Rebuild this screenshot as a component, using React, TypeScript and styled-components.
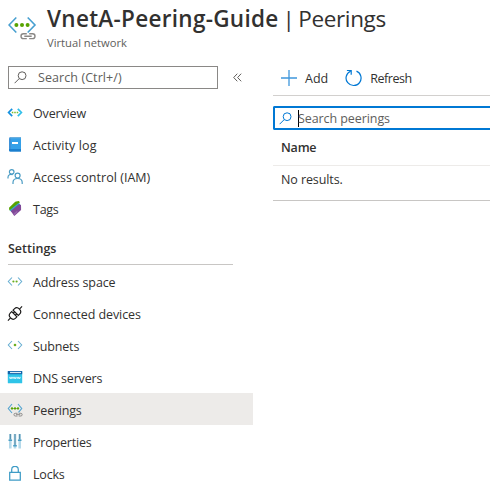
import React from 'react';
import styled, { createGlobalStyle } from 'styled-components';

const Global = createGlobalStyle`
  * { box-sizing: border-box; }
  body { margin: 0; background: #fff; color: #323130; font-family: 'Open Sans', 'Noto Sans', sans-serif; font-size: 12.5px; overflow: hidden; }
  svg { display: block; flex: none; }
`;

const Page = styled.main`
  width: 490px;
  height: 502px;
  overflow: hidden;
  background: #fff;
`;
const Header = styled.header`
  display: flex;
  height: 66px;
  padding: 16px 0 0 8px;
  gap: 10px;
`;
const Titles = styled.div`
  margin-top: -12px;
  white-space: nowrap;
`;
const Title = styled.h1`
  margin: 0;
  height: 30px;
  font-size: 22.5px;
  line-height: 30px;
  font-weight: 400;
  letter-spacing: -0.35px;
  word-spacing: -1.7px;
`;
const Strong = styled.span`
  font-weight: 600;
  letter-spacing: 0.3px;
`;
const Subtitle = styled.div`
  height: 16px;
  margin-top: 1px;
  font-size: 11.2px;
  line-height: 16px;
  color: #605e5c;
`;
const Columns = styled.div`
  display: flex;
`;
const Sidebar = styled.nav`
  width: 253px;
  flex: none;
`;
const Main = styled.section`
  flex: 1;
  margin-left: 20px;
`;
const SearchRow = styled.div`
  display: flex;
  align-items: center;
  gap: 15px;
  height: 23px;
  margin: 0 0 7px 8px;
`;
const SearchBox = styled.div`
  display: flex;
  align-items: center;
  width: 210px;
  height: 23px;
  padding-left: 5px;
  gap: 11px;
  border: 1px solid #8a8886;
  color: #605e5c;
`;
const Item = styled.a<{ $active?: boolean }>`
  display: flex;
  align-items: center;
  height: 32px;
  padding: 2px 0 0 7px;
  gap: 10px;
  background: ${(p) => (p.$active ? '#edebe9' : 'transparent')};
`;
const Label = styled.span<{ $spacing?: number }>`
  padding-top: 1px;
  line-height: 17px;
  white-space: nowrap;
  letter-spacing: ${(p) => p.$spacing ?? 0}px;
`;
const SearchLabel = styled(Label)`
  padding: 0;
  line-height: 18px;
`;
const SectionTitle = styled.h2`
  width: 225px;
  height: 33px;
  margin: 8px 0 0 8px;
  padding-top: 8px;
  border-bottom: 1px solid #c8c6c4;
  font-size: 12.5px;
  line-height: 18px;
  font-weight: 600;
`;
const Toolbar = styled.div`
  display: flex;
  height: 30px;
  padding: 3px 0 0 8px;
  gap: 17px;
  border-bottom: 1px solid #d2d0ce;
`;
const Command = styled.button`
  display: flex;
  align-items: center;
  height: 18px;
  padding: 0;
  gap: 8px;
  border: 0;
  background: none;
  color: inherit;
  font: inherit;
`;
const Filter = styled.div`
  display: flex;
  align-items: center;
  height: 24px;
  margin-top: 10px;
  padding-left: 4px;
  border: 2px solid #0078d4;
  border-right: 0;
  border-radius: 2px 0 0 2px;
  color: #605e5c;
`;
const FilterText = styled(Label)`
  margin-left: -1px;
`;
const Caret = styled.span`
  width: 1px;
  height: 17px;
  margin: 0 0 0 6px;
  background: #000;
`;
const HeadCell = styled.div`
  height: 36px;
  padding: 9px 0 0 8px;
  border-bottom: 1px solid #edebe9;
  line-height: 18px;
  font-weight: 600;
  letter-spacing: -0.2px;
`;
const Cell = styled.div`
  height: 35px;
  padding: 5px 0 0 8px;
  border-bottom: 1px solid #c8c6c4;
  line-height: 18px;
  letter-spacing: -0.1px;
`;

const Magnifier = ({ color }: { color: string }) => (
  <svg width="13" height="13" viewBox="0 0 13 13" fill="none" stroke={color} strokeWidth="1">
    <circle cx="8.100" cy="4.700" r="3.900" />
    <path d="M5.200 7.600.6 12.200" />
  </svg>
);

const NetworkIcon = () => (
  <svg width="29" height="25" viewBox="0 0 29 25" fill="none">
    <path d="M8.300 1.500 1 9l7.300 7.500M19.700 1.500 27 9l-7.300 7.500" stroke="#479fd0" strokeWidth="1.600" />
    <circle cx="8.400" cy="9" r="2" fill="#57a300" />
    <circle cx="14" cy="9" r="2" fill="#57a300" />
    <circle cx="19.600" cy="9" r="2" fill="#57a300" />
    <path
      d="M18.800 17.800h-3.400a2.400 2.400 0 0 0 0 4.800h3.400M21.200 17.800h3.400a2.400 2.400 0 0 1 0 4.800h-3.400M16.300 20.200h7.400"
      stroke="#fff"
      strokeWidth="3"
    />
    <path
      d="M18.800 17.800h-3.400a2.400 2.400 0 0 0 0 4.800h3.400M21.200 17.800h3.400a2.400 2.400 0 0 1 0 4.800h-3.400M16.300 20.200h7.400"
      stroke="#8a8886"
      strokeWidth="1.400"
    />
  </svg>
);

type IconName = 'overview' | 'log' | 'iam' | 'tag' | 'address' | 'plug' | 'subnet' | 'dns' | 'peering' | 'properties' | 'lock';

const drawings: Record<IconName, React.ReactNode> = {
  overview: (
    <>
      <path d="M5.200 3.900 1.600 7.500l3.600 3.600" stroke="#1490df" strokeWidth="1.700" />
      <path d="m10.800 3.900 3.600 3.600-3.600 3.600" stroke="#32bfea" strokeWidth="1.700" />
      <path d="M4.800 7.500h1.500M7.250 7.500h1.500M9.700 7.500h1.500" stroke="#76bc2d" strokeWidth="1.500" />
    </>
  ),
  log: (
    <>
      <path d="M3.500 0H14v14.500H3.500A1.500 1.500 0 0 1 2 13V1.500A1.500 1.500 0 0 1 3.500 0Z" fill="#3c91d8" />
      <path d="M4 1h10v11.500H4z" fill="#35a0e8" />
      <path d="M2 12h12v2.600H3.500Q2 14.600 2 13z" fill="#1b7fce" />
      <path d="M3.500 0H14v1.200H2.600z" fill="#6aaede" />
      <path d="M5 5h6v2H5z" fill="#fff" />
    </>
  ),
  iam: (
    <g stroke="#4a9cc4" strokeWidth="1.200">
      <circle cx="4.700" cy="2.900" r="2.300" />
      <path d="M1 9.500V8.300c0-2.600 2.300-3.400 4.600-2.500" />
      <circle cx="10.600" cy="6.600" r="2.500" />
      <path d="M6 15v-1.500c0-2.500 1.700-4 4.600-4s4.600 1.500 4.600 4V15" />
    </g>
  ),
  tag: (
    <>
      <path d="M2 6.800 7.700 1.200Q8.300.6 9 .5L12 0l.8 1.500L5 9.500 2.300 9.200z" fill="#57a300" />
      <path d="M2.600 9.200 11.500 2l1.600 1v2L6 12z" fill="#32a8cf" />
      <path d="m3.700 10 8.100-6.700 2.200.6.100 5-6.800 6.200z" fill="#804998" />
      <path d="m6.500 12.500 3.300-2.500 1 1-3.600 3.300z" fill="#9864ae" />
    </>
  ),
  address: (
    <>
      <path d="M5 3.500 1.300 7.500 5 11.500M11 3.500l3.700 4-3.700 4" stroke="#65add1" strokeWidth="1.050" />
      <circle cx="6.400" cy="7.500" r="1.100" fill="#69ae21" />
      <circle cx="9.600" cy="7.500" r="1.100" fill="#69ae21" />
    </>
  ),
  plug: (
    <g stroke="#1b1a19" strokeWidth="1.150" transform="translate(0 -.5) rotate(-45 8 8)">
      <path d="M-2 8h3.700M14.300 8H18M7 4.300H5.200C3 4.300 1.700 6 1.700 8s1.300 3.700 3.500 3.700H7zM9 4.300h1.800c2.200 0 3.500 1.700 3.500 3.700s-1.300 3.700-3.500 3.700H9zM7 6.500h2M7 9.500h2" />
    </g>
  ),
  subnet: (
    <>
      <path d="M5 3 1.300 7 5 11M11 3l3.700 4L11 11" stroke="#65add1" strokeWidth="1.050" />
      <circle cx="8" cy="7" r="1.300" fill="#69ae21" />
    </>
  ),
  dns: (
    <>
      <path d="M.8 1.500h14.400v11.200q0 .5-.5.500H1.300q-.5 0-.5-.5z" fill="#2fc4e8" />
      <path d="M.8 1h14.400v3.200H.8z" fill="#1464aa" />
      <path d="M3 1.900h11v1.200H3z" fill="#dcecf5" />
      <path
        d="m2.500 6.900.8 2 .8-2 .8 2 .8-2M6.300 6.900l.8 2 .8-2 .8 2 .8-2M10.200 6.900l.8 2 .8-2 .8 2 .8-2"
        stroke="#effcff"
        strokeWidth=".8"
      />
    </>
  ),
  peering: (
    <g transform="translate(0 .5)">
      <path d="M5 1.500 1.300 6 5 10.500M11 1.500 14.700 6l-3.200 3.800" stroke="#55a5d0" strokeWidth="1.150" />
      <path d="M3.800 6h8.400" stroke="#78b73c" strokeWidth=".8" />
      <g fill="#57a300">
        <circle cx="5" cy="6" r="1.150" />
        <circle cx="8" cy="6" r="1.150" />
        <circle cx="11" cy="6" r="1.150" />
      </g>
      <path
        d="M10.500 10.800H8.300a1.350 1.350 0 0 0 0 2.700h2.200M11.700 10.800h2.100a1.350 1.350 0 0 1 0 2.700h-2.100M9 12.150h4.200"
        stroke="#8a8886"
        strokeWidth=".95"
      />
    </g>
  ),
  properties: (
    <>
      <path d="M2 0h2.600v14.600H2zM6.700 0h2.600v14.600H6.700zM11.400 0H14v14.600h-2.600z" fill="#b4d9ea" />
      <path d="M3.300 0v5.500M8 0v11M12.700 0v5.500" stroke="#4d87a5" strokeWidth="1.100" />
      <path d="M1.500 5.500h3.600v1.600H1.500zM6.200 11h3.600v1.600H6.200zM10.900 5.500h3.600v1.600h-3.600z" fill="#4b9fc5" />
    </>
  ),
  lock: (
    <g stroke="#3f9cc6" strokeWidth="1.250">
      <path d="M2.700 6.400h10.600V14H2.700z" />
      <path d="M4.700 6.400V3.600a3.300 3.300 0 0 1 6.600 0v2.800" />
    </g>
  ),
};

const MenuIcon = ({ name }: { name: IconName }) => (
  <svg width="16" height="16" viewBox="0 0 16 16" fill="none">
    {drawings[name]}
  </svg>
);

interface Entry {
  icon: IconName;
  text: string;
  spacing?: number;
  active?: boolean;
}

const general: Entry[] = [
  { icon: 'overview', text: 'Overview', spacing: -0.15 },
  { icon: 'log', text: 'Activity log', spacing: 0.1 },
  { icon: 'iam', text: 'Access control (IAM)', spacing: 0.03 },
  { icon: 'tag', text: 'Tags', spacing: -0.25 },
];
const settings: Entry[] = [
  { icon: 'address', text: 'Address space', spacing: -0.12 },
  { icon: 'plug', text: 'Connected devices', spacing: -0.07 },
  { icon: 'subnet', text: 'Subnets', spacing: -0.15 },
  { icon: 'dns', text: 'DNS servers', spacing: -0.15 },
  { icon: 'peering', text: 'Peerings', spacing: -0.2, active: true },
  { icon: 'properties', text: 'Properties', spacing: -0.2 },
  { icon: 'lock', text: 'Locks', spacing: -0.2 },
];

const Menu = ({ entries }: { entries: Entry[] }) => (
  <>
    {entries.map((e) => (
      <Item key={e.text} $active={e.active}>
        <MenuIcon name={e.icon} />
        <Label $spacing={e.spacing}>{e.text}</Label>
      </Item>
    ))}
  </>
);

export default function App() {
  return (
    <Page>
      <Global />
      <Header>
        <NetworkIcon />
        <Titles>
          <Title>
            <Strong>VnetA-Peering-Guide</Strong> | Peerings
          </Title>
          <Subtitle>Virtual network</Subtitle>
        </Titles>
      </Header>
      <Columns>
        <Sidebar>
          <SearchRow>
            <SearchBox>
              <Magnifier color="#605e5c" />
              <SearchLabel $spacing={0.08}>Search (Ctrl+/)</SearchLabel>
            </SearchBox>
            <svg width="9" height="9" viewBox="0 0 9 9" fill="none" stroke="#605e5c" strokeWidth="1">
              <path d="M4.300.7.700 4.500l3.600 3.800M8.200.7 4.600 4.500l3.600 3.800" />
            </svg>
          </SearchRow>
          <Menu entries={general} />
          <SectionTitle>Settings</SectionTitle>
          <Menu entries={settings} />
        </Sidebar>
        <Main>
          <Toolbar>
            <Command>
              <svg width="16" height="16" viewBox="0 0 16 16" stroke="#3f97dc" strokeWidth="1.300">
                <path d="M8 0v16M0 8h16" />
              </svg>
              <Label>Add</Label>
            </Command>
            <Command>
              <svg width="17" height="18" viewBox="0 0 17 18" fill="none" stroke="#0078d4" strokeWidth="1.200">
                <path d="M11.500 2.100A7.500 7.500 0 1 1 5.400 2.200M1.900 1.500h4.300v4.300" />
              </svg>
              <Label $spacing={-0.45}>Refresh</Label>
            </Command>
          </Toolbar>
          <Filter>
            <Magnifier color="#0078d4" />
            <Caret />
            <FilterText $spacing={-0.08}>Search peerings</FilterText>
          </Filter>
          <HeadCell>Name</HeadCell>
          <Cell>No results.</Cell>
        </Main>
      </Columns>
    </Page>
  );
}
